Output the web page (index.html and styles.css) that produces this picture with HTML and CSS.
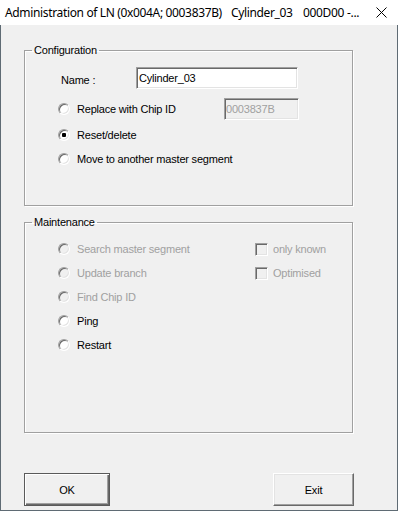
FILE: index.html
```html
<!DOCTYPE html>
<html>
<head>
<meta charset="utf-8">
<link rel="stylesheet" href="styles.css">
</head>
<body>
<div class="window">
  <div class="titlebar">
    <div class="title">
      <span class="t1">Administration of LN (0x004A; 0003837B)</span><span class="t2">Cylinder_03</span><span class="t3">000D00</span><span class="t4">-...</span>
    </div>
    <svg class="close" width="11" height="11" viewBox="0 0 11 11"><path d="M0.5 0.5 L10.5 10.5 M10.5 0.5 L0.5 10.5" stroke="#000" stroke-width="1" fill="none"/></svg>
  </div>
  <div class="body">
    <fieldset class="group config">
      <legend>Configuration</legend>
      <div class="gbody config-body">
        <div class="name-row">
          <span class="name-label">Name :</span>
          <div class="field name-field">Cylinder_03</div>
        </div>
        <div class="opt-row replace-row">
          <span class="radio"></span>
          <span class="opt-text replace-text">Replace with Chip ID</span>
          <div class="field disabled chip-field">0003837B</div>
        </div>
        <div class="opt-row reset-row">
          <span class="radio checked"></span>
          <span class="opt-text">Reset/delete</span>
        </div>
        <div class="opt-row">
          <span class="radio"></span>
          <span class="opt-text">Move to another master segment</span>
        </div>
      </div>
    </fieldset>
    <fieldset class="group maint">
      <legend>Maintenance</legend>
      <div class="gbody maint-body">
        <div class="opt-row dis"><span class="radio off"></span><span class="opt-text">Search master segment</span></div>
        <div class="opt-row dis"><span class="check off"></span><span class="check-text">only known</span></div>
        <div class="opt-row dis"><span class="radio off"></span><span class="opt-text">Update branch</span></div>
        <div class="opt-row dis"><span class="check off"></span><span class="check-text">Optimised</span></div>
        <div class="opt-row dis wide"><span class="radio off"></span><span class="opt-text">Find Chip ID</span></div>
        <div class="opt-row wide"><span class="radio"></span><span class="opt-text">Ping</span></div>
        <div class="opt-row wide"><span class="radio"></span><span class="opt-text">Restart</span></div>
      </div>
    </fieldset>
    <div class="buttons">
      <button class="btn ok">OK</button>
      <button class="btn exit">Exit</button>
    </div>
  </div>
</div>
</body>
</html>
```
FILE: styles.css
```css
* { box-sizing: border-box; }
html, body { margin: 0; padding: 0; }
body {
  width: 398px;
  height: 511px;
  background: #f0f0f0;
  font-family: "Liberation Sans", Arial, sans-serif;
  font-size: 11px;
  letter-spacing: -0.2px;
  color: #000;
}
.window {
  width: 398px;
  height: 511px;
  display: flex;
  flex-direction: column;
}
.titlebar {
  height: 25px;
  background: #fff;
  display: flex;
  align-items: center;
  padding-left: 5px;
  padding-right: 11px;
  flex: none;
}
.title {
  flex: 1;
  display: flex;
  white-space: nowrap;
  font-family: "Noto Sans", "Open Sans", sans-serif;
  font-size: 12px;
  letter-spacing: -0.35px;
  color: #000;
  line-height: 16px;
  padding-top: 1px;
}
.title span { display: inline-block; }
.t1 { width: 226px; }
.t2 { width: 72px; }
.t3 { width: 44px; }
.close { display: block; flex: none; }
.body {
  flex: 1;
  border: 1px solid #5f6b74;
  border-top: none;
  padding: 19px 44px 0 23px;
  display: flex;
  flex-direction: column;
}
.group {
  margin: 0;
  padding: 0;
  border: 1px solid #a0a0a0;
  box-shadow: inset 1px 1px 0 #fff, 1px 1px 0 #fff;
  width: 329px;
}
.group legend {
  margin-left: 7px;
  padding: 0 2px;
  line-height: 12px;
  height: 12px;
}
.config { height: 162px; }
.maint { height: 217px; margin-top: 10px; }
.gbody { padding-left: 33px; }
.config-body { padding-top: 11px; }
.name-row {
  display: flex;
  align-items: center;
  height: 22px;
}
.name-label {
  width: 78px;
  padding-left: 3px;
  padding-top: 3px;
}
.field {
  height: 22px;
  background: #fff;
  border: 1px solid;
  border-color: #a0a0a0 #fff #fff #a0a0a0;
  box-shadow: inset 1px 1px 0 #696969, inset -1px -1px 0 #e3e3e3;
  padding: 3px 2px 0 2px;
  line-height: 14px;
}
.name-field { width: 162px; }
.field.disabled {
  background: #f0f0f0;
  color: #a0a0a0;
  padding-left: 1px;
}
.chip-field { width: 75px; margin-left: auto; margin-right: 53px; }
.opt-row {
  display: flex;
  align-items: center;
  height: 24px;
}
.replace-row { height: 22px; margin-top: 9px; }
.reset-row { margin-top: 3px; }
.radio {
  width: 12px;
  height: 12px;
  border-radius: 50%;
  background: #fff;
  border: 1px solid;
  border-color: #a0a0a0 #fff #fff #a0a0a0;
  box-shadow: inset 1px 1px 0 #696969, inset -1px -1px 0 #e3e3e3;
  position: relative;
  flex: none;
}
.radio.off { background: #f0f0f0; }
.radio.checked::after {
  content: "";
  position: absolute;
  left: 3px;
  top: 3px;
  width: 4px;
  height: 4px;
  border-radius: 1px;
  background: #000;
}
.opt-text { margin-left: 7px; line-height: 14px; }
.check {
  width: 13px;
  height: 13px;
  background: #f0f0f0;
  border: 1px solid;
  border-color: #a0a0a0 #fff #fff #a0a0a0;
  box-shadow: inset 1px 1px 0 #696969, inset -1px -1px 0 #e3e3e3;
  flex: none;
}
.check-text { margin-left: 5px; line-height: 14px; }
.maint-body {
  padding-top: 9px;
  display: grid;
  grid-template-columns: 197px auto;
}
.maint-body .wide { grid-column: 1 / span 2; }
.dis { color: #a0a0a0; }
.buttons {
  margin-top: 40px;
  display: flex;
  justify-content: space-between;
  width: 330px;
}
.btn {
  font-family: "Liberation Sans", Arial, sans-serif;
  font-size: 11px;
  letter-spacing: -0.2px;
  height: 33px;
  background: #f0f0f0;
  color: #000;
  padding: 0;
  margin: 0;
  line-height: 14px;
}
.ok {
  width: 86px;
  border: 1px solid #5a5a5a;
  box-shadow: inset 1px 1px 0 #fff, inset -1px -1px 0 #696969, inset -2px -2px 0 #a0a0a0;
}
.exit {
  width: 81px;
  border: 1px solid;
  border-color: #fff #696969 #696969 #fff;
  box-shadow: inset -1px -1px 0 #a0a0a0, inset 1px 1px 0 #e3e3e3;
}
```
